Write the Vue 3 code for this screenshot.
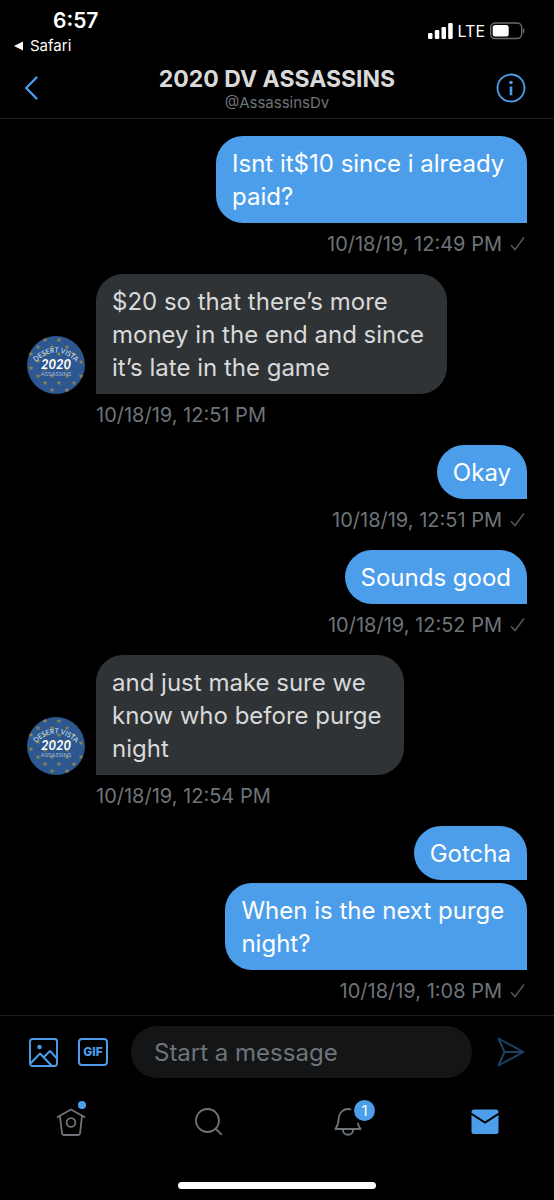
<script setup>
import { ref } from 'vue'

const draft = ref('')

const groups = [
  { sent: true, bubbles: ['Isnt it$10 since i already \npaid?'], time: '10/18/19, 12:49 PM' },
  { sent: false, bubbles: ['$20 so that there’s more \nmoney in the end and since \nit’s late in the game'], time: '10/18/19, 12:51 PM' },
  { sent: true, bubbles: ['Okay'], time: '10/18/19, 12:51 PM' },
  { sent: true, bubbles: ['Sounds good'], time: '10/18/19, 12:52 PM' },
  { sent: false, bubbles: ['and just make sure we \nknow who before purge \nnight'], time: '10/18/19, 12:54 PM' },
  { sent: true, bubbles: ['Gotcha', 'When is the next purge \nnight?'], time: '10/18/19, 1:08 PM' },
]

const stars = [
  [18, 4], [32, 4], [11, 11], [25, 11], [40, 11], [4, 18], [18, 18], [32, 18], [47, 18],
  [11, 25], [25, 25], [40, 25], [54, 26], [4, 32], [18, 33], [40, 33], [11, 40], [25, 40],
  [40, 40], [54, 40], [18, 47], [32, 47], [47, 47], [25, 54], [40, 54],
]
</script>

<template>
  <div class="app">
    <header class="top">
      <div class="status">
        <div class="clock">
          <span class="time">6:57</span>
          <a class="back-app" href="#">
            <svg width="10" height="10" viewBox="0 0 10 10" aria-hidden="true"><path d="M0 5 9 0.5v9z" fill="#fff" /></svg>
            Safari
          </a>
        </div>
        <div class="signals">
          <svg width="25" height="16" viewBox="0 0 25 16" fill="#fff" aria-hidden="true">
            <rect x="0" y="10" width="4.500" height="6" rx="1.200" />
            <rect x="6.800" y="7" width="4.500" height="9" rx="1.200" />
            <rect x="13.500" y="4" width="4.500" height="12" rx="1.200" />
            <rect x="20.200" y="0" width="4.500" height="16" rx="1.200" />
          </svg>
          <span class="lte">LTE</span>
          <svg width="35" height="18" viewBox="0 0 35 18" aria-hidden="true">
            <rect x="0.700" y="1" width="31" height="15.500" rx="4.500" fill="none" stroke="#6b6b6b" stroke-width="1.400" />
            <rect x="2.700" y="3" width="16" height="11.500" rx="2.500" fill="#fff" />
            <path d="M33 6.200c2 .8 2 4.400 0 5.200z" fill="#6b6b6b" />
          </svg>
        </div>
      </div>
      <div class="bar">
        <button class="icon-btn" type="button" aria-label="Back">
          <svg width="14" height="24" viewBox="0 0 14 24" fill="none" stroke="#4c9eeb" stroke-width="2.400" stroke-linecap="round" stroke-linejoin="round"><path d="M12.500 1.500 2.200 12l10.300 10.500" /></svg>
        </button>
        <div class="title">
          <h1>2020 DV ASSASSINS</h1>
          <span>@AssassinsDv</span>
        </div>
        <button class="icon-btn end" type="button" aria-label="Conversation info">
          <svg width="30" height="30" viewBox="0 0 30 30" fill="none" stroke="#4c9eeb">
            <circle cx="15" cy="15" r="13.500" stroke-width="1.800" />
            <path d="M15 13.500v8.800" stroke-width="2.600" />
            <circle cx="15" cy="9.500" r="1.800" fill="#4c9eeb" stroke="none" />
          </svg>
        </button>
      </div>
    </header>

    <main class="thread">
      <section v-for="(g, i) in groups" :key="i" class="group" :class="{ sent: g.sent }">
        <div class="row">
          <svg v-if="!g.sent" class="avatar" width="58" height="58" viewBox="0 0 58 58" role="img" aria-label="2020 DV ASSASSINS">
            <circle cx="29" cy="29" r="29" fill="#2c5790" />
            <g fill="#8d8552">
              <path v-for="([x, y], n) in stars" :key="n" :transform="`translate(${x} ${y})`" d="M0-2.600.7-.8 2.500-.8 1.100.4 1.600 2.200 0 1.100-1.600 2.200-1.100.4-2.500-.8-.7-.8z" />
            </g>
            <path :id="`arc${i}`" d="M6 29Q29 4 52 29" fill="none" />
            <text class="arc"><textPath :href="`#arc${i}`" startOffset="50%" text-anchor="middle">DESERT VISTA</textPath></text>
            <text class="year" x="29" y="33" text-anchor="middle">2020</text>
            <text class="word" x="29" y="40" text-anchor="middle">ASSASSINS</text>
          </svg>
          <div class="stack">
            <p v-for="b in g.bubbles" :key="b" class="bubble">{{ b }}</p>
          </div>
        </div>
        <div class="meta">
          <time>{{ g.time }}</time>
          <svg v-if="g.sent" width="15" height="15" viewBox="0 0 15 15" fill="none" stroke="#53565a" stroke-width="1.500" aria-label="Sent"><path d="M1 9.200 5 13.500 14 1.500" /></svg>
        </div>
      </section>
    </main>

    <footer class="bottom">
      <form class="composer" @submit.prevent>
        <button class="icon-btn" type="button" aria-label="Add photo">
          <svg width="29" height="29" viewBox="0 0 29 29" fill="none" stroke="#4c9eeb" stroke-width="1.900" stroke-linejoin="round">
            <rect x="1" y="1" width="27" height="27" rx="2.500" />
            <path d="M1.500 25.500 11 15.500 22.500 27.500M15 19l6-6 7 7.500" />
            <circle cx="10.500" cy="9" r="2.200" fill="#4c9eeb" stroke="none" />
          </svg>
        </button>
        <button class="gif" type="button" aria-label="Add GIF">GIF</button>
        <input v-model="draft" type="text" placeholder="Start a message" aria-label="Start a message" />
        <button class="icon-btn send" type="submit" aria-label="Send">
          <svg width="28" height="30" viewBox="0 0 28 30" fill="none" stroke="#1f4262" stroke-width="1.900" stroke-linejoin="round"><path d="M1.500 1.500 26.500 15 1.500 28.500 7.500 15zM7.500 15h19" /></svg>
        </button>
      </form>
      <nav class="tabs" aria-label="Main">
        <a href="#" aria-label="Home">
          <svg width="30" height="30" viewBox="0 0 30 30" fill="none" stroke="#6e7479" stroke-width="1.800" stroke-linecap="round" stroke-linejoin="round">
            <path d="M1.500 10 15 2.500 28.500 10M4 9l2 17.500Q6.200 28 7.800 28h14.400Q23.800 28 24 26.500L26 9" />
            <circle cx="15" cy="15.500" r="4.400" />
          </svg>
          <i class="dot"></i>
        </a>
        <a href="#" aria-label="Search">
          <svg width="30" height="30" viewBox="0 0 30 30" fill="none" stroke="#6e7479" stroke-width="1.800" stroke-linecap="round">
            <circle cx="13.500" cy="13.500" r="11.500" /><path d="m21.800 21.800 5.500 5.500" />
          </svg>
        </a>
        <a href="#" aria-label="Notifications, 1 new">
          <svg width="34" height="30" viewBox="0 0 34 30" fill="none" stroke="#6e7479" stroke-width="1.800" stroke-linecap="round" stroke-linejoin="round">
            <path d="M20.500 2.300C14 .8 9 5.500 8.600 12c-.2 4.200-.5 6.500-3.200 10h25.200c-1.500-2-2.200-3.500-2.700-5.500M12.800 22.500c.5 7 9.900 7 10.400 0" />
          </svg>
          <b class="badge">1</b>
        </a>
        <a href="#" aria-label="Messages" aria-current="page">
          <svg width="28" height="26" viewBox="0 0 28 26">
            <rect x="0.500" y="0.500" width="27" height="24.500" rx="2.500" fill="#4c9eeb" />
            <path d="M0 4.500 14 13.500 28 4.500" fill="none" stroke="#000" stroke-width="1.900" />
          </svg>
        </a>
      </nav>
      <div class="indicator"></div>
    </footer>
  </div>
</template>

<style>
body { margin: 0; background: #000; }
</style>

<style scoped>
.app {
  box-sizing: border-box;
  min-height: 100vh;
  display: flex;
  flex-direction: column;
  background: #000;
  color: #fff;
  font-family: Inter, Roboto, "Liberation Sans", sans-serif;
}
button, input { font: inherit; border: 0; margin: 0; padding: 0; background: none; }
a { color: inherit; text-decoration: none; }
svg { display: block; flex: none; }
.top { border-bottom: 1px solid #1b1d1f; }
.status { display: flex; justify-content: space-between; padding: 9px 29px 0 14px; height: 47px; }
.clock { display: flex; flex-direction: column; }
.time { padding-left: 39px; font-size: 21px; line-height: 24px; font-weight: 600; }
.back-app { display: flex; align-items: center; gap: 6px; font-size: 15px; line-height: 26px; font-weight: 400; }
.signals { display: flex; align-items: center; gap: 5px; height: 43px; }
.lte { font-size: 16px; line-height: 20px; }
.bar { display: grid; grid-template-columns: 44px 1fr 40px; align-items: center; padding: 2px 28px 0 24px; height: 60px; }
.icon-btn { display: flex; cursor: pointer; }
.end { justify-content: flex-end; }
.title { padding-top: 4px; text-align: center; }
h1 { margin: 0; font-size: 23px; line-height: 26px; font-weight: 700; color: #d9d9d9; }
.title span { display: block; font-size: 15px; line-height: 22px; color: #6e7479; }
.thread { flex: 1; padding: 17px 27px 0; }
.group { display: flex; flex-direction: column; align-items: flex-start; }
.group.sent { align-items: flex-end; }
.row { display: flex; align-items: flex-end; gap: 11px; }
.stack { display: flex; flex-direction: column; align-items: inherit; gap: 3px; }
.sent .stack { align-items: flex-end; }
.bubble {
  margin: 0;
  padding: 11px 16px 10px;
  border-radius: 27px 27px 27px 0;
  background: #303336;
  color: #d9d9d9;
  font-size: 24px;
  line-height: 33px;
  white-space: break-spaces;
}
.sent .bubble { border-radius: 27px 27px 0 27px; background: #4c9eeb; color: #fff; }
.meta { display: flex; align-items: center; gap: 8px; height: 41px; padding: 0 2px 10px 69px; font-size: 20px; line-height: 24px; color: #6e7479; }
.group:last-child .meta { padding-bottom: 4px; }
.bottom { border-top: 1px solid #1b1d1f; }
.composer { display: flex; align-items: center; padding: 10px 29px 0; }
.gif {
  width: 30px; height: 28px; margin-left: 20px; box-sizing: border-box;
  border: 2px solid #4c9eeb; border-radius: 4px;
  color: #4c9eeb; font-size: 12px; line-height: 24px; font-weight: 800; text-align: center;
}
input {
  flex: 1; min-width: 0; height: 52px; margin: 0 25px 0 23px; padding: 0 23px; box-sizing: border-box;
  border-radius: 26px; background: #141517; color: #d9d9d9; font-size: 24px; outline: none;
}
input::placeholder { color: #6e7479; opacity: 1; }
.tabs { display: grid; grid-template-columns: repeat(4, 1fr); justify-items: center; align-items: center; height: 88px; padding-left: 2px; }
.tabs a { position: relative; display: flex; }
.dot { position: absolute; top: -6px; right: 0; width: 8px; height: 8px; border-radius: 50%; background: #4c9eeb; }
.badge {
  position: absolute; top: -7px; right: -11px; width: 21px; height: 21px; border-radius: 50%;
  background: #4c9eeb; font-size: 15px; line-height: 21px; font-weight: 400; text-align: center;
}
.indicator { width: 198px; height: 7px; margin: 16px auto 11px; border-radius: 4px; background: #fff; }
.arc { font: 400 7px Lato, sans-serif; fill: #dbe5f0; }
.year { font: italic 700 13px "Liberation Sans Narrow", Lato, sans-serif; fill: #fff; }
.word { font: 400 6px Lato, sans-serif; fill: #a9bdd4; }
</style>
